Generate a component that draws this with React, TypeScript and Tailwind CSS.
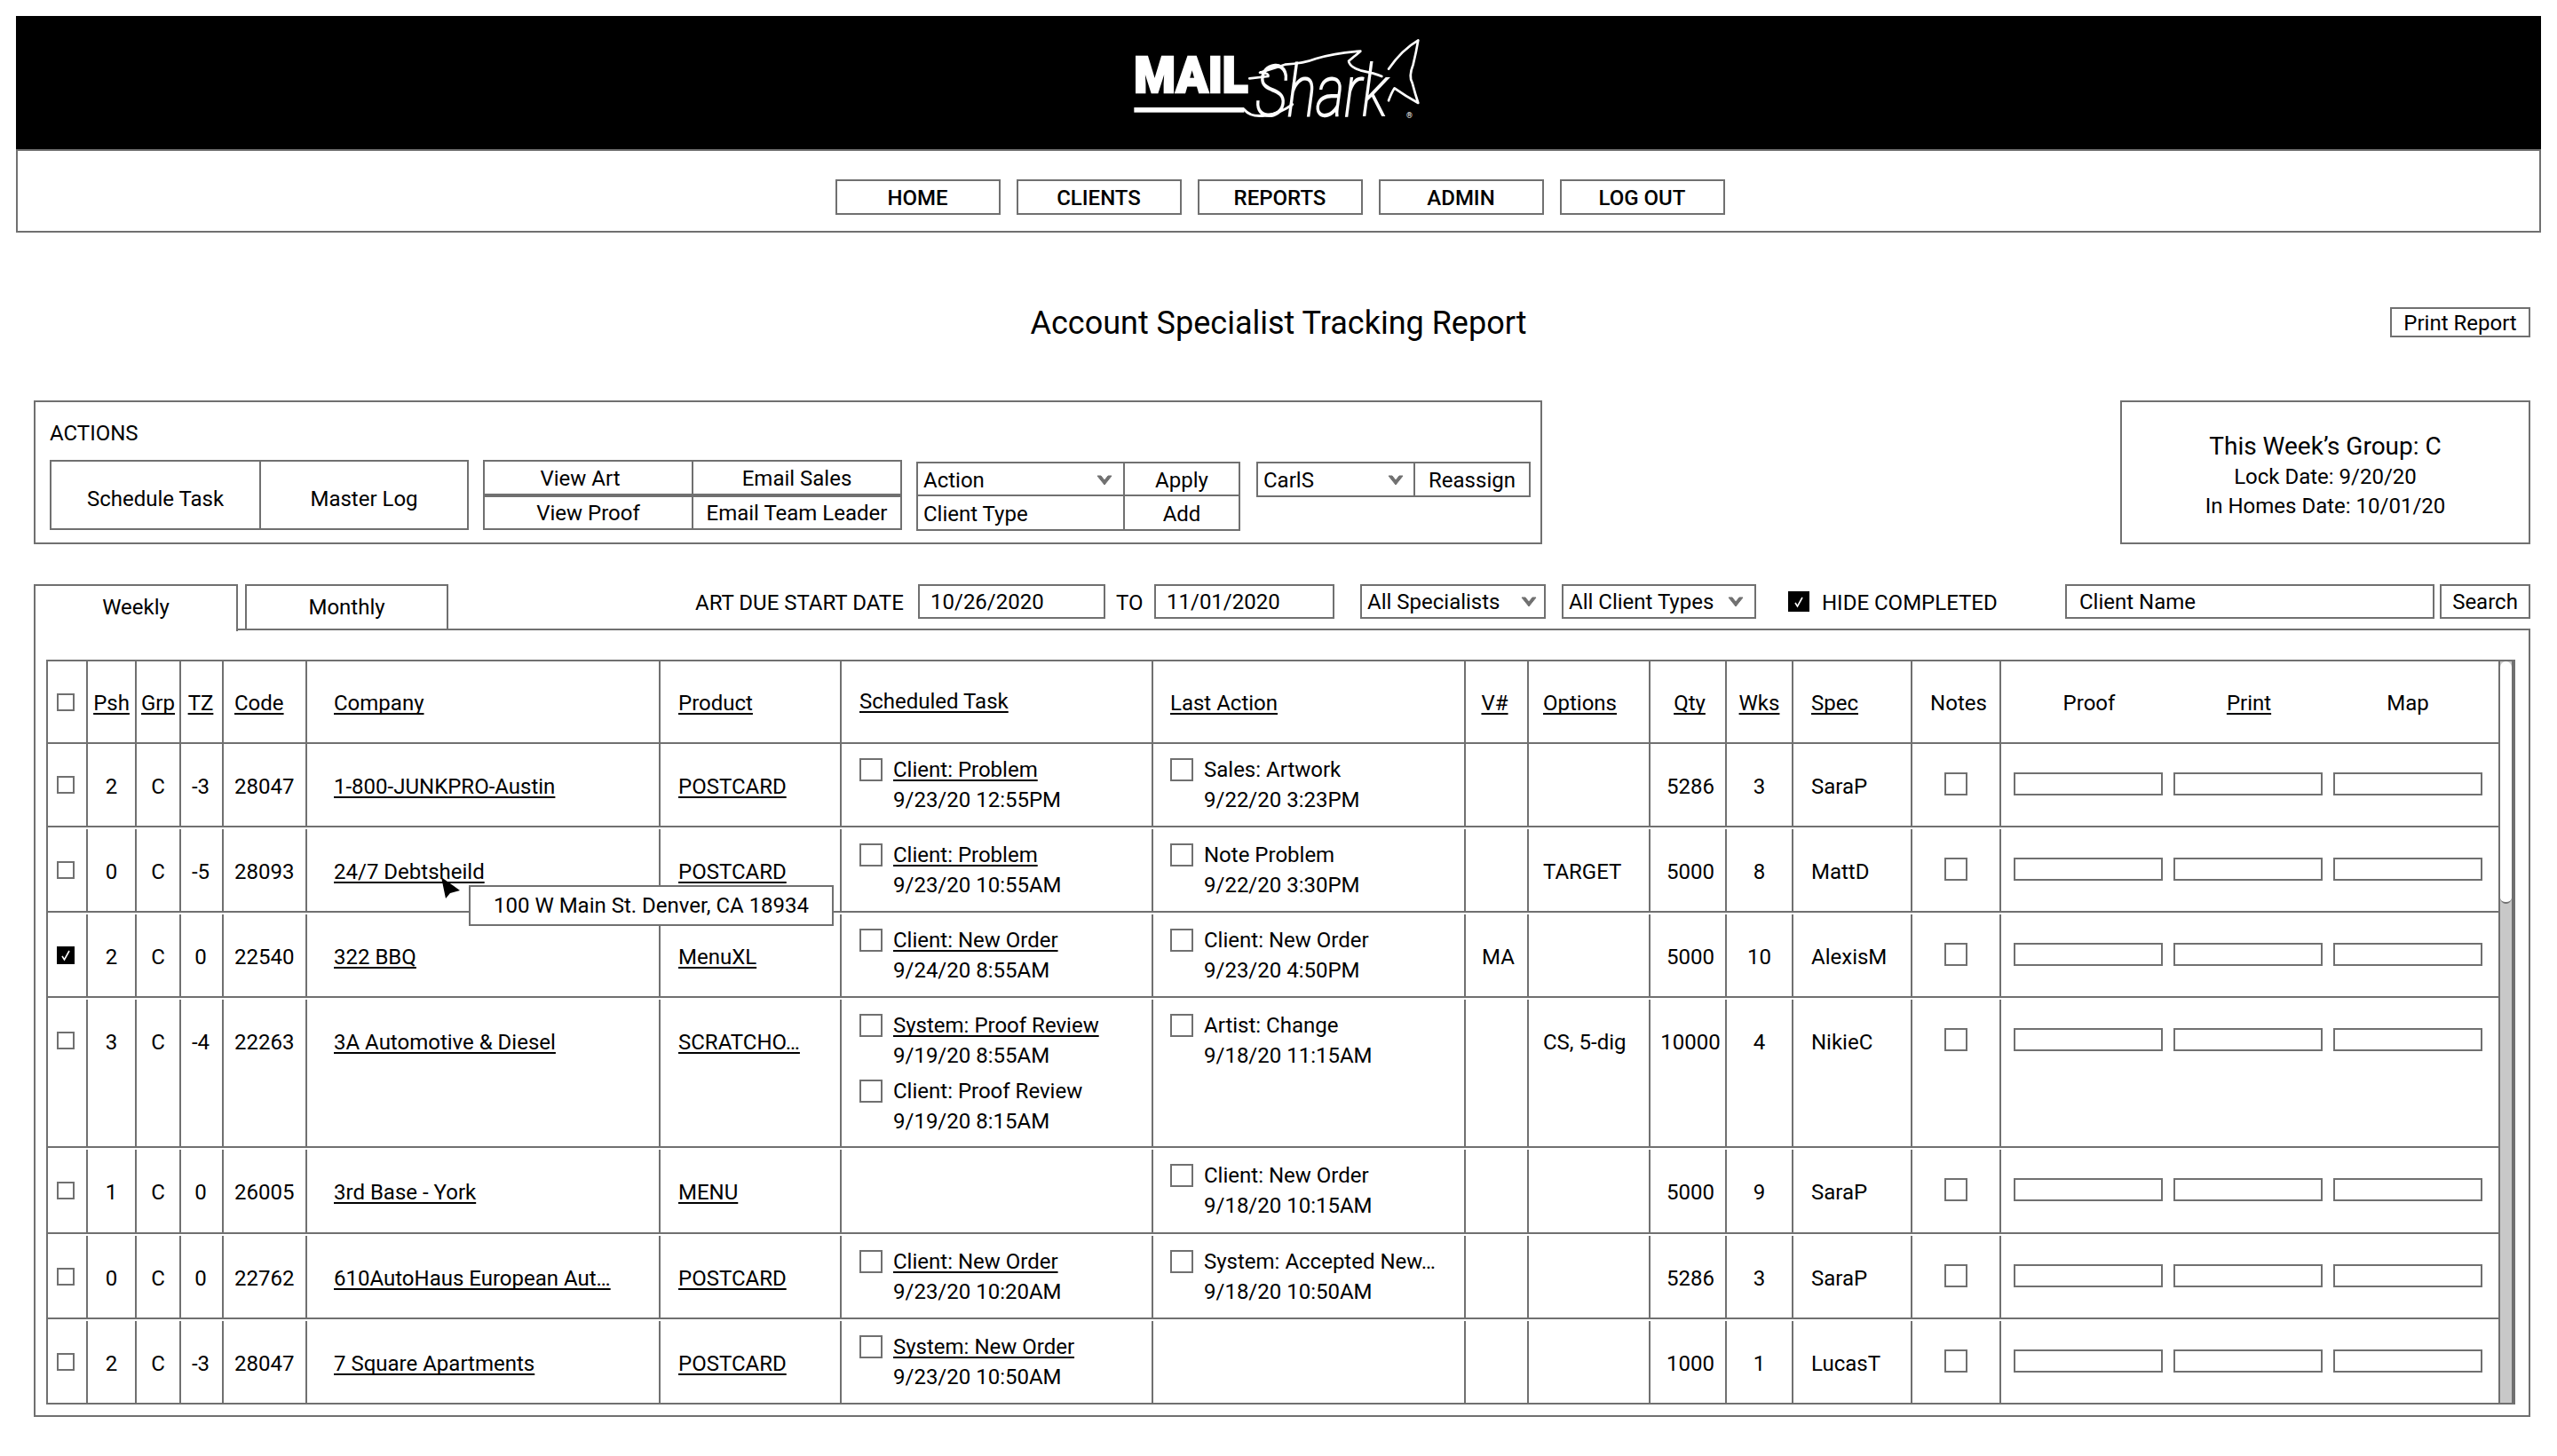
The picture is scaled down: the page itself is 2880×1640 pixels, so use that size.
import React from "react";

type Task = { title: string; date: string; link?: boolean };
type Row = {
  checked?: boolean;
  psh: string;
  grp: string;
  tz: string;
  code: string;
  company: string;
  product: string;
  sched: Task[];
  last: Task[];
  v?: string;
  options?: string;
  qty: string;
  wks: string;
  spec: string;
  height: string;
};

const rows: Row[] = [
  { psh: "2", grp: "C", tz: "-3", code: "28047", company: "1-800-JUNKPRO-Austin", product: "POSTCARD", sched: [{ title: "Client: Problem", date: "9/23/20 12:55PM", link: true }], last: [{ title: "Sales: Artwork", date: "9/22/20 3:23PM" }], qty: "5286", wks: "3", spec: "SaraP", height: "h-[94px]" },
  { psh: "0", grp: "C", tz: "-5", code: "28093", company: "24/7 Debtsheild", product: "POSTCARD", sched: [{ title: "Client: Problem", date: "9/23/20 10:55AM", link: true }], last: [{ title: "Note Problem", date: "9/22/20 3:30PM" }], options: "TARGET", qty: "5000", wks: "8", spec: "MattD", height: "h-[96px]" },
  { checked: true, psh: "2", grp: "C", tz: "0", code: "22540", company: "322 BBQ", product: "MenuXL", sched: [{ title: "Client: New Order", date: "9/24/20 8:55AM", link: true }], last: [{ title: "Client: New Order", date: "9/23/20 4:50PM" }], v: "MA", qty: "5000", wks: "10", spec: "AlexisM", height: "h-[96px]" },
  { psh: "3", grp: "C", tz: "-4", code: "22263", company: "3A Automotive & Diesel", product: "SCRATCHO…", sched: [{ title: "System: Proof Review", date: "9/19/20 8:55AM", link: true }, { title: "Client: Proof Review", date: "9/19/20 8:15AM" }], last: [{ title: "Artist: Change", date: "9/18/20 11:15AM" }], options: "CS, 5-dig", qty: "10000", wks: "4", spec: "NikieC", height: "h-[169px]" },
  { psh: "1", grp: "C", tz: "0", code: "26005", company: "3rd Base - York", product: "MENU", sched: [], last: [{ title: "Client: New Order", date: "9/18/20 10:15AM" }], qty: "5000", wks: "9", spec: "SaraP", height: "h-[97px]" },
  { psh: "0", grp: "C", tz: "0", code: "22762", company: "610AutoHaus European Aut…", product: "POSTCARD", sched: [{ title: "Client: New Order", date: "9/23/20 10:20AM", link: true }], last: [{ title: "System: Accepted New…", date: "9/18/20 10:50AM" }], qty: "5286", wks: "3", spec: "SaraP", height: "h-[96px]" },
  { psh: "2", grp: "C", tz: "-3", code: "28047", company: "7 Square Apartments", product: "POSTCARD", sched: [{ title: "System: New Order", date: "9/23/20 10:50AM", link: true }], last: [], qty: "1000", wks: "1", spec: "LucasT", height: "h-[96px]" },
];

const GRID = "grid grid-cols-[43px_55px_50px_48px_94px_398px_204px_351px_352px_71px_137px_86px_75px_134px_100px_562px]";
const LINK = "underline decoration-2 underline-offset-[3px] [text-decoration-skip-ink:none]";
const BORDER = "border-2 border-[#707070]";

function Chevron() {
  return (
    <svg width="18" height="12" viewBox="0 0 18 12" className="shrink-0">
      <path d="M1 1 L9 11 L17 1 L13 1 L9 6 L5 1 Z" fill="#707070" stroke="#707070" strokeWidth="1" strokeLinejoin="round" />
    </svg>
  );
}

function Check({ size }: { size: "sm" | "lg" }) {
  return (
    <div className={size === "sm" ? "flex h-[20px] w-[20px] items-center justify-center bg-black" : "flex h-[23px] w-[24px] items-center justify-center bg-black"}>
      <svg width="12" height="14" viewBox="0 0 12 14">
        <path d="M2 8 L4.5 12 L10 2" fill="none" stroke="#fff" strokeWidth="1.6" />
      </svg>
    </div>
  );
}

function Logo() {
  return (
    <svg width="340" height="112" viewBox="0 0 1020 336" role="img" aria-label="Mail Shark">
      <text x="25" y="205" fill="#fff" stroke="#fff" strokeWidth="7" fontFamily="Roboto, sans-serif" fontWeight="900" fontSize="165" textLength="385" lengthAdjust="spacingAndGlyphs">MAIL</text>
      <rect x="25" y="255" width="372" height="17" fill="#fff" />
      <path d="M397 262 Q420 290 470 282 Q520 275 560 245" fill="none" stroke="#fff" strokeWidth="9" strokeLinecap="round" />
      <path d="M415 157 L478 150 Q482 138 450 137 Q500 122 535 110 Q600 106 640 90 Q710 70 790 65 Q770 82 750 98 Q752 118 790 130 Q840 140 862 150" fill="none" stroke="#fff" strokeWidth="8" strokeLinejoin="round" strokeLinecap="round" />
      <path d="M885 125 Q930 60 985 28 Q978 70 968 110 Q952 150 965 172 Q975 210 985 240 Q940 215 905 190 Q895 205 885 232" fill="none" stroke="#fff" strokeWidth="8" strokeLinejoin="round" strokeLinecap="round" />
      <text transform="translate(436 282) scale(1 1.3)" fill="#fff" stroke="#fff" strokeWidth="5" fontFamily="Roboto, sans-serif" fontStyle="italic" fontWeight="100" fontSize="185">Shark</text>
      <text x="945" y="290" fill="#fff" fontFamily="Roboto, sans-serif" fontSize="26">®</text>
    </svg>
  );
}

function NavButton({ label }: { label: string }) {
  return <div className={`flex h-[40px] w-[186px] items-center justify-center pt-[2px] font-medium ${BORDER}`}>{label}</div>;
}

function TaskBlock({ task }: { task: Task }) {
  return (
    <div className="flex gap-[12px]">
      <div className={`mt-[4px] h-[26px] w-[26px] shrink-0 ${BORDER}`} />
      <div className="whitespace-nowrap">
        <div className={task.link ? LINK : ""}>{task.title}</div>
        <div>{task.date}</div>
      </div>
    </div>
  );
}

function Cell({ gap, className, children }: { gap?: boolean; className?: string; children?: React.ReactNode }) {
  return <div className={`border-l-2 border-[#707070] ${gap ? "mt-[2px]" : ""} ${className ?? ""}`}>{children}</div>;
}

function TableRow({ row, index }: { row: Row; index: number }) {
  const gap = index > 0;
  return (
    <div className={`${GRID} ${row.height} border-b-2 border-[#707070]`}>
      <div className={`pl-[10px] pt-[36px] ${gap ? "mt-[2px]" : ""}`}>
        {row.checked ? <Check size="sm" /> : <div className={`h-[20px] w-[20px] ${BORDER}`} />}
      </div>
      <Cell gap={gap} className="pt-[31px] text-center">{row.psh}</Cell>
      <Cell gap={gap} className="pt-[31px] text-center">{row.grp}</Cell>
      <Cell gap={gap} className="pr-[2px] pt-[31px] text-center">{row.tz}</Cell>
      <Cell gap={gap} className="pl-[12px] pt-[31px]">{row.code}</Cell>
      <Cell gap={gap} className="pl-[30px] pt-[31px]"><span className={LINK}>{row.company}</span></Cell>
      <Cell gap={gap} className="pl-[20px] pt-[31px]"><span className={LINK}>{row.product}</span></Cell>
      <Cell gap={gap} className="flex flex-col gap-[6px] pl-[20px] pt-[12px]">
        {row.sched.map((t) => <TaskBlock key={t.date} task={t} />)}
      </Cell>
      <Cell gap={gap} className="flex flex-col gap-[6px] pl-[19px] pt-[12px]">
        {row.last.map((t) => <TaskBlock key={t.date} task={t} />)}
      </Cell>
      <Cell gap={gap} className="pl-[4px] pt-[31px] text-center">{row.v}</Cell>
      <Cell gap={gap} className="pl-[16px] pt-[31px]">{row.options}</Cell>
      <Cell gap={gap} className="pl-[6px] pt-[31px] text-center">{row.qty}</Cell>
      <Cell gap={gap} className="pt-[31px] text-center">{row.wks}</Cell>
      <Cell gap={gap} className="pl-[20px] pt-[31px]">{row.spec}</Cell>
      <Cell gap={gap} className="flex justify-center pt-[32px]">
        <div className={`h-[26px] w-[26px] ${BORDER}`} />
      </Cell>
      <Cell gap={gap} className="flex gap-[12px] pl-[14px] pt-[32px]">
        <div className={`h-[26px] w-[168px] ${BORDER}`} />
        <div className={`h-[26px] w-[168px] ${BORDER}`} />
        <div className={`h-[26px] w-[168px] ${BORDER}`} />
      </Cell>
    </div>
  );
}

function HeaderRow() {
  const h = "pt-[30px]";
  return (
    <div className={`${GRID} h-[93px] border-b-2 border-[#707070]`}>
      <div className="pl-[10px] pt-[36px]"><div className={`h-[20px] w-[20px] ${BORDER}`} /></div>
      <Cell className={`${h} text-center`}><span className={LINK}>Psh</span></Cell>
      <Cell className={`${h} text-center`}><span className={LINK}>Grp</span></Cell>
      <Cell className={`${h} pr-[2px] text-center`}><span className={LINK}>TZ</span></Cell>
      <Cell className={`${h} pl-[12px]`}><span className={LINK}>Code</span></Cell>
      <Cell className={`${h} pl-[30px]`}><span className={LINK}>Company</span></Cell>
      <Cell className={`${h} pl-[20px]`}><span className={LINK}>Product</span></Cell>
      <Cell className="pl-[20px] pt-[28px]"><span className={LINK}>Scheduled Task</span></Cell>
      <Cell className={`${h} pl-[19px]`}><span className={LINK}>Last Action</span></Cell>
      <Cell className={`${h} pr-[4px] text-center`}><span className={LINK}>V#</span></Cell>
      <Cell className={`${h} pl-[16px]`}><span className={LINK}>Options</span></Cell>
      <Cell className={`${h} pl-[4px] text-center`}><span className={LINK}>Qty</span></Cell>
      <Cell className={`${h} text-center`}><span className={LINK}>Wks</span></Cell>
      <Cell className={`${h} pl-[20px]`}><span className={LINK}>Spec</span></Cell>
      <Cell className={`${h} pl-[6px] text-center`}>Notes</Cell>
      <Cell className={`${h} flex pl-[15px]`}>
        <div className="w-[180px] pr-[12px] text-center">Proof</div>
        <div className="w-[180px] pr-[12px] text-center"><span className={LINK}>Print</span></div>
        <div className="w-[180px] pr-[14px] text-center">Map</div>
      </Cell>
    </div>
  );
}

export default function App() {
  return (
    <div className="relative h-[1640px] w-[2880px] overflow-hidden bg-white text-[24px] leading-[34px] text-black [font-family:Roboto,sans-serif]">
      {/* Header */}
      <header className="mx-[18px] mt-[18px] w-[2844px]">
        <div className="flex h-[152px] items-start justify-center border-b-2 border-[#707070] bg-black pt-[18px]">
          <div className="ml-[-2px]"><Logo /></div>
        </div>
        <nav className="flex h-[92px] justify-center gap-[18px] border-x-2 border-b-2 border-[#707070] pl-[3px] pt-[32px]">
          {["HOME", "CLIENTS", "REPORTS", "ADMIN", "LOG OUT"].map((l) => <NavButton key={l} label={l} />)}
        </nav>
      </header>

      {/* Title */}
      <div className="mt-[84px] flex h-[34px] items-center px-[30px]">
        <div className="flex-1" />
        <h1 className="mt-[2px] whitespace-nowrap text-[36px] font-normal leading-[36px]">Account Specialist Tracking Report</h1>
        <div className="flex flex-1 justify-end">
          <div className={`flex h-[34px] w-[158px] items-center justify-center pt-[1px] ${BORDER}`}>Print Report</div>
        </div>
      </div>

      {/* Actions + group */}
      <div className="ml-[38px] mr-[30px] mt-[71px] flex justify-between">
        <section className={`h-[162px] w-[1699px] pl-[16px] pt-[21px] ${BORDER}`}>
          <div className="h-[28px] leading-[28px]">ACTIONS</div>
          <div className="mt-[16px] flex items-start">
            <div className={`flex h-[79px] w-[472px] ${BORDER}`}>
              <div className="flex w-[234px] items-center justify-center pt-[8px]">Schedule Task</div>
              <div className="flex flex-1 items-center justify-center border-l-2 border-[#707070] pt-[8px]">Master Log</div>
            </div>
            <div className="ml-[16px] w-[472px]">
              <div className={`flex h-[40px] ${BORDER}`}>
                <div className="flex w-[233px] items-center justify-center pr-[18px] pt-[2px]">View Art</div>
                <div className="flex flex-1 items-center justify-center border-l-2 border-[#707070] pt-[2px]">Email Sales</div>
              </div>
              <div className={`flex h-[39px] ${BORDER}`}>
                <div className="flex w-[233px] items-center justify-center pt-[1px]">View Proof</div>
                <div className="flex flex-1 items-center justify-center border-l-2 border-[#707070] pt-[1px]">Email Team Leader</div>
              </div>
            </div>
            <div className={`ml-[16px] mt-[2px] h-[78px] w-[365px] ${BORDER}`}>
              <div className="flex h-[37px] border-b-2 border-[#707070]">
                <div className="flex w-[231px] items-center justify-between pl-[6px] pr-[12px] pt-[2px]">Action<Chevron /></div>
                <div className="flex flex-1 items-center justify-center border-l-2 border-[#707070] pt-[2px]">Apply</div>
              </div>
              <div className="flex h-[37px]">
                <div className="flex w-[231px] items-center pl-[6px] pt-[2px]">Client Type</div>
                <div className="flex flex-1 items-center justify-center border-l-2 border-[#707070] pt-[2px]">Add</div>
              </div>
            </div>
            <div className={`ml-[18px] mt-[2px] flex h-[40px] w-[309px] ${BORDER}`}>
              <div className="flex w-[175px] items-center justify-between pl-[6px] pr-[11px] pt-[2px]">CarlS<Chevron /></div>
              <div className="flex flex-1 items-center justify-center border-l-2 border-[#707070] pt-[2px]">Reassign</div>
            </div>
          </div>
        </section>
        <section className={`flex h-[162px] w-[462px] flex-col items-center pt-[33px] ${BORDER}`}>
          <div className="text-[28px] leading-[34px]">This Week’s Group: C</div>
          <div className="mt-[1px] leading-[33px]">Lock Date: 9/20/20</div>
          <div className="leading-[32px]">In Homes Date: 10/01/20</div>
        </section>
      </div>

      {/* Tabs + filters */}
      <div className="relative z-10 ml-[38px] mr-[30px] mt-[45px] flex h-[51px] items-start">
        <div className="flex h-[53px] w-[230px] items-center justify-center border-x-2 border-t-2 border-[#707070] bg-white pb-[4px]">Weekly</div>
        <div className="ml-[8px] flex h-[51px] w-[229px] items-center justify-center border-x-2 border-t-2 border-[#707070] pb-[2px]">Monthly</div>
        <div className="ml-[278px] flex h-[39px] w-[251px] items-center whitespace-nowrap pt-[2px]">ART DUE START DATE</div>
        <div className={`flex h-[39px] w-[211px] items-center pl-[12px] pt-[1px] ${BORDER}`}>10/26/2020</div>
        <div className="ml-[12px] flex h-[39px] w-[43px] items-center pt-[2px]">TO</div>
        <div className={`flex h-[39px] w-[203px] items-center pl-[12px] pt-[1px] ${BORDER}`}>11/01/2020</div>
        <div className={`ml-[29px] flex h-[39px] w-[209px] items-center justify-between pl-[6px] pr-[8px] pt-[1px] ${BORDER}`}>All Specialists<Chevron /></div>
        <div className={`ml-[18px] flex h-[39px] w-[219px] items-center justify-between pl-[6px] pr-[12px] pt-[1px] ${BORDER}`}>All Client Types<Chevron /></div>
        <div className="ml-[36px] mt-[8px]"><Check size="lg" /></div>
        <div className="ml-[14px] flex h-[39px] flex-1 items-center whitespace-nowrap pt-[2px]">HIDE COMPLETED</div>
        <div className={`flex h-[39px] w-[416px] items-center pl-[14px] pt-[1px] ${BORDER}`}>Client Name</div>
        <div className={`ml-[6px] flex h-[39px] w-[102px] items-center justify-center pt-[1px] ${BORDER}`}>Search</div>
      </div>

      {/* Panel */}
      <main className={`ml-[38px] mt-[-1px] h-[888px] w-[2812px] pl-[12px] pt-[33px] ${BORDER}`}>
        <div className={`flex h-[839px] w-[2781px] border-b-0 ${BORDER}`}>
          <div className="w-[2760px] shrink-0">
            <HeaderRow />
            {rows.map((r, i) => <TableRow key={r.company} row={r} index={i} />)}
          </div>
          <div className="flex-1 border-x-2 border-b-2 border-[#707070] bg-[#c8c8c8]">
            <div className="h-[273px] rounded-b-[10px] rounded-t-[10px] border-b-2 border-[#707070] bg-white" />
          </div>
        </div>
      </main>

      {/* Tooltip with pointer */}
      <div className={`absolute left-[528px] top-[997px] z-20 flex h-[46px] w-[411px] items-center whitespace-nowrap bg-white pl-[26px] ${BORDER}`}>100 W Main St. Denver, CA 18934</div>
      <svg className="absolute left-[495px] top-[986px] z-20" width="26" height="28" viewBox="0 0 26 28">
        <path d="M2 2 L23 17 L12 20 L7 26 Z" fill="#000" />
      </svg>
    </div>
  );
}
